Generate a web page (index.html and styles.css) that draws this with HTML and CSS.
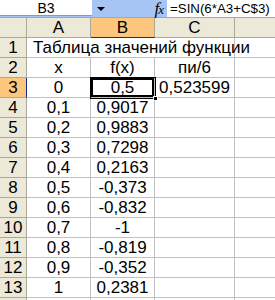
FILE: index.html
```html
<!DOCTYPE html>
<html>
<head>
<meta charset="utf-8">
<link rel="stylesheet" href="styles.css">
</head>
<body>
<div class="fbar">
  <div class="namebox">B3</div>
  <div class="dd"><span class="tri"></span></div>
  <div class="fx"><i>f</i><i class="x">x</i></div>
  <div class="formula">=SIN(6*A3+C$3)</div>
</div>
<div class="sheet">
  <div class="h corner"></div>
  <div class="h col">A</div>
  <div class="h col sel">B</div>
  <div class="h col">C</div>
  <div class="h col last"></div>

  <div class="h row">1</div>
  <div class="c title">Таблица значений функции</div>
  <div class="c nob"></div>
  <div class="c"></div>
  <div class="c last"></div>

  <div class="h row">2</div>
  <div class="c">x</div>
  <div class="c">f(x)</div>
  <div class="c">пи/6</div>
  <div class="c last"></div>

  <div class="h row rsel">3</div>
  <div class="c">0</div>
  <div class="c active">0,5<span class="handle"></span></div>
  <div class="c">0,523599</div>
  <div class="c last"></div>

  <div class="h row">4</div><div class="c">0,1</div><div class="c">0,9017</div><div class="c"></div><div class="c last"></div>
  <div class="h row">5</div><div class="c">0,2</div><div class="c">0,9883</div><div class="c"></div><div class="c last"></div>
  <div class="h row">6</div><div class="c">0,3</div><div class="c">0,7298</div><div class="c"></div><div class="c last"></div>
  <div class="h row">7</div><div class="c">0,4</div><div class="c">0,2163</div><div class="c"></div><div class="c last"></div>
  <div class="h row">8</div><div class="c">0,5</div><div class="c">-0,373</div><div class="c"></div><div class="c last"></div>
  <div class="h row">9</div><div class="c">0,6</div><div class="c">-0,832</div><div class="c"></div><div class="c last"></div>
  <div class="h row">10</div><div class="c">0,7</div><div class="c">-1</div><div class="c"></div><div class="c last"></div>
  <div class="h row">11</div><div class="c">0,8</div><div class="c">-0,819</div><div class="c"></div><div class="c last"></div>
  <div class="h row">12</div><div class="c">0,9</div><div class="c">-0,352</div><div class="c"></div><div class="c last"></div>
  <div class="h row">13</div><div class="c">1</div><div class="c">0,2381</div><div class="c"></div><div class="c last"></div>
  <div class="h row"></div><div class="c"></div><div class="c"></div><div class="c"></div><div class="c last"></div>
</div>
</body>
</html>
```
FILE: styles.css
```css
html, body {
  margin: 0;
  padding: 0;
  background: #fff;
  overflow: hidden;
  width: 275px;
  height: 300px;
}
body {
  font-family: "Liberation Sans", Arial, sans-serif;
  font-size: 17px;
  color: #000;
}
.fbar {
  display: flex;
  height: 17px;
  background: #a6c4f4;
}
.namebox {
  width: 92px;
  height: 15px;
  background: #fff;
  border-bottom: 1px solid #7f9db9;
  text-align: center;
  font-size: 14px;
  line-height: 16px;
}
.dd {
  width: 25px;
  display: flex;
  align-items: center;
  justify-content: center;
}
.tri {
  width: 0;
  height: 0;
  border-left: 4px solid transparent;
  border-right: 4px solid transparent;
  border-top: 4px solid #000;
  margin-right: 8px;
}
.fx {
  width: 47px;
  display: flex;
  justify-content: flex-end;
  align-items: center;
  padding-right: 3px;
  font-family: "Liberation Serif", serif;
  font-size: 17px;
  line-height: 16px;
}
.fx .x {
  font-size: 13px;
  margin-left: -1px;
  margin-top: 3px;
}
.formula {
  flex: 1;
  min-width: 0;
  background: #fff;
  padding-left: 3px;
  font-size: 13.3px;
  line-height: 17px;
  white-space: nowrap;
  overflow: hidden;
}
.sheet {
  display: grid;
  grid-template-columns: 27px 64px 64px 80px 1fr;
  grid-template-rows: 20px;
  grid-auto-rows: 20px;
  border-top: 1px solid #aca899;
  height: 282px;
  overflow: hidden;
}
.h {
  background: #ece9d8;
  border-right: 1px solid #aca899;
  border-bottom: 1px solid #aca899;
  text-align: center;
  line-height: 19px;
}
.h.last { border-right: none; }
.h.sel {
  background: #fcc67c;
  border-bottom: 1px solid #102c8c;
}
.h.rsel {
  background: #fcc67c;
  border-right: 1px solid #102c8c;
}
.c {
  border-right: 1px solid #c0c0c0;
  border-bottom: 1px solid #c0c0c0;
  text-align: center;
  line-height: 19px;
  white-space: nowrap;
  position: relative;
}
.c.last { border-right: none; }
.c.title {
  text-align: left;
  padding-left: 6px;
  overflow: visible;
  border-right: none;
  z-index: 1;
}
.c.nob { border-right: none; }
.c.active {
  box-shadow: inset 0 0 0 2px #000;
  outline: 1px solid #000;
  outline-offset: 0;
  z-index: 2;
}
.handle {
  position: absolute;
  right: -4px;
  bottom: -4px;
  width: 5px;
  height: 5px;
  background: #000;
  border: 1px solid #fff;
  box-sizing: border-box;
}
```
